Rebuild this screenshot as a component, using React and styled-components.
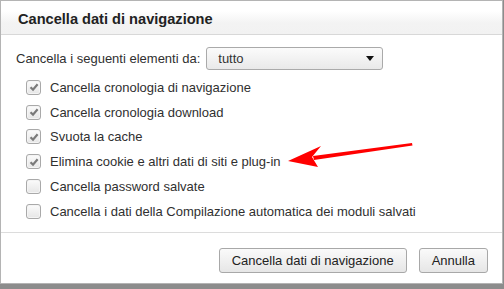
import React from 'react';
import styled, { createGlobalStyle } from 'styled-components';

const GlobalStyle = createGlobalStyle`
	html, body {
		margin: 0;
		padding: 0;
		background: #8c8c8c;
		font-family: 'Liberation Sans', Arial, sans-serif;
	}
`;

const items = [
	{ label: 'Cancella cronologia di navigazione', checked: true },
	{ label: 'Cancella cronologia download', checked: true },
	{ label: 'Svuota la cache', checked: true },
	{ label: 'Elimina cookie e altri dati di siti e plug-in', checked: true, arrow: true },
	{ label: 'Cancella password salvate', checked: false },
	{ label: 'Cancella i dati della Compilazione automatica dei moduli salvati', checked: false },
];

const Check = () => (
	<svg width='10' height='10' viewBox='0 0 10 10'>
		<path d='M1.5 5.2 L4 7.6 L8.6 2.2' fill='none' stroke='#7a7a7a' strokeWidth='2.2' />
	</svg>
);

const Arrow = () => (
	<svg width='130' height='28' viewBox='0 0 130 28'>
		<polygon points='26,16 125,3 125.5,5.5 27,20' fill='#f00' />
		<polygon points='1,21 34,6 25,17 31,27' fill='#f00' />
	</svg>
);

const App = () => {
	return (
		<>
			<GlobalStyle />
			<Dialog>
				<Header>Cancella dati di navigazione</Header>
				<Body>
					<Row>
						<span>Cancella i seguenti elementi da:</span>
						<Select>
							tutto
							<Caret />
						</Select>
					</Row>
					<List>
						{items.map((it) => (
							<Item key={it.label}>
								<Box>{it.checked && <Check />}</Box>
								{it.label}
								{it.arrow && (
									<ArrowWrap>
										<Arrow />
									</ArrowWrap>
								)}
							</Item>
						))}
					</List>
				</Body>
				<Footer>
					<Button>Cancella dati di navigazione</Button>
					<Button>Annulla</Button>
				</Footer>
			</Dialog>
		</>
	);
};

export default App;

const Dialog = styled.div`
	width: 501px;
	height: 282px;
	background: #fff;
	border: 1px solid #b4b4b4;
	display: flex;
	flex-direction: column;
	color: #303030;
	font-size: 13px;
`;

const Header = styled.div`
	height: 34px;
	box-sizing: border-box;
	padding: 10px 0 0 17px;
	font-size: 14.6px;
	font-weight: bold;
	color: #222;
	background: linear-gradient(#fff 0, #fff 10px, #f3f3f3 22px, #f2f2f2 100%);
	border-bottom: 1px solid #d8d8d8;
`;

const Body = styled.div`
	padding: 11px 0 0 15px;
	flex: 1;
	border-bottom: 1px solid #dcdcdc;
`;

const Row = styled.div`
	display: flex;
	align-items: center;
	gap: 6px;
	height: 24px;
`;

const Select = styled.div`
	position: relative;
	width: 177px;
	height: 23px;
	box-sizing: border-box;
	border: 1px solid #aaa;
	border-radius: 3px;
	background: linear-gradient(#fbfbfb, #e9e9e9);
	padding: 3px 0 0 11px;
	color: #333;
`;

const Caret = styled.span`
	position: absolute;
	right: 8px;
	top: 8px;
	border-left: 4px solid transparent;
	border-right: 4px solid transparent;
	border-top: 5px solid #111;
`;

const List = styled.div`
	margin-top: 5px;
	padding-left: 10px;
	display: flex;
	flex-direction: column;
`;

const Item = styled.div`
	position: relative;
	display: flex;
	align-items: center;
	gap: 9px;
	height: 24.8px;
`;

const Box = styled.span`
	width: 13px;
	height: 13px;
	border: 1px solid #a9a9a9;
	border-radius: 3px;
	background: linear-gradient(#fbfbfb, #e6e6e6);
	display: flex;
	align-items: center;
	justify-content: center;
	box-shadow: inset 0 0 0 1px #f4f4f4;
`;

const ArrowWrap = styled.span`
	position: absolute;
	left: 261px;
	top: -9px;
	display: flex;
`;

const Footer = styled.div`
	height: 50px;
	display: flex;
	justify-content: flex-end;
	align-items: flex-start;
	gap: 12px;
	padding: 15px 14px 0 0;
	box-sizing: border-box;
`;

const Button = styled.button`
	height: 25px;
	padding: 0 12px;
	font: 13px 'Liberation Sans', Arial, sans-serif;
	color: #222;
	border: 1px solid #a8a8a8;
	border-radius: 3px;
	background: linear-gradient(#fafafa, #e6e6e6);
	min-width: 68px;
`;
